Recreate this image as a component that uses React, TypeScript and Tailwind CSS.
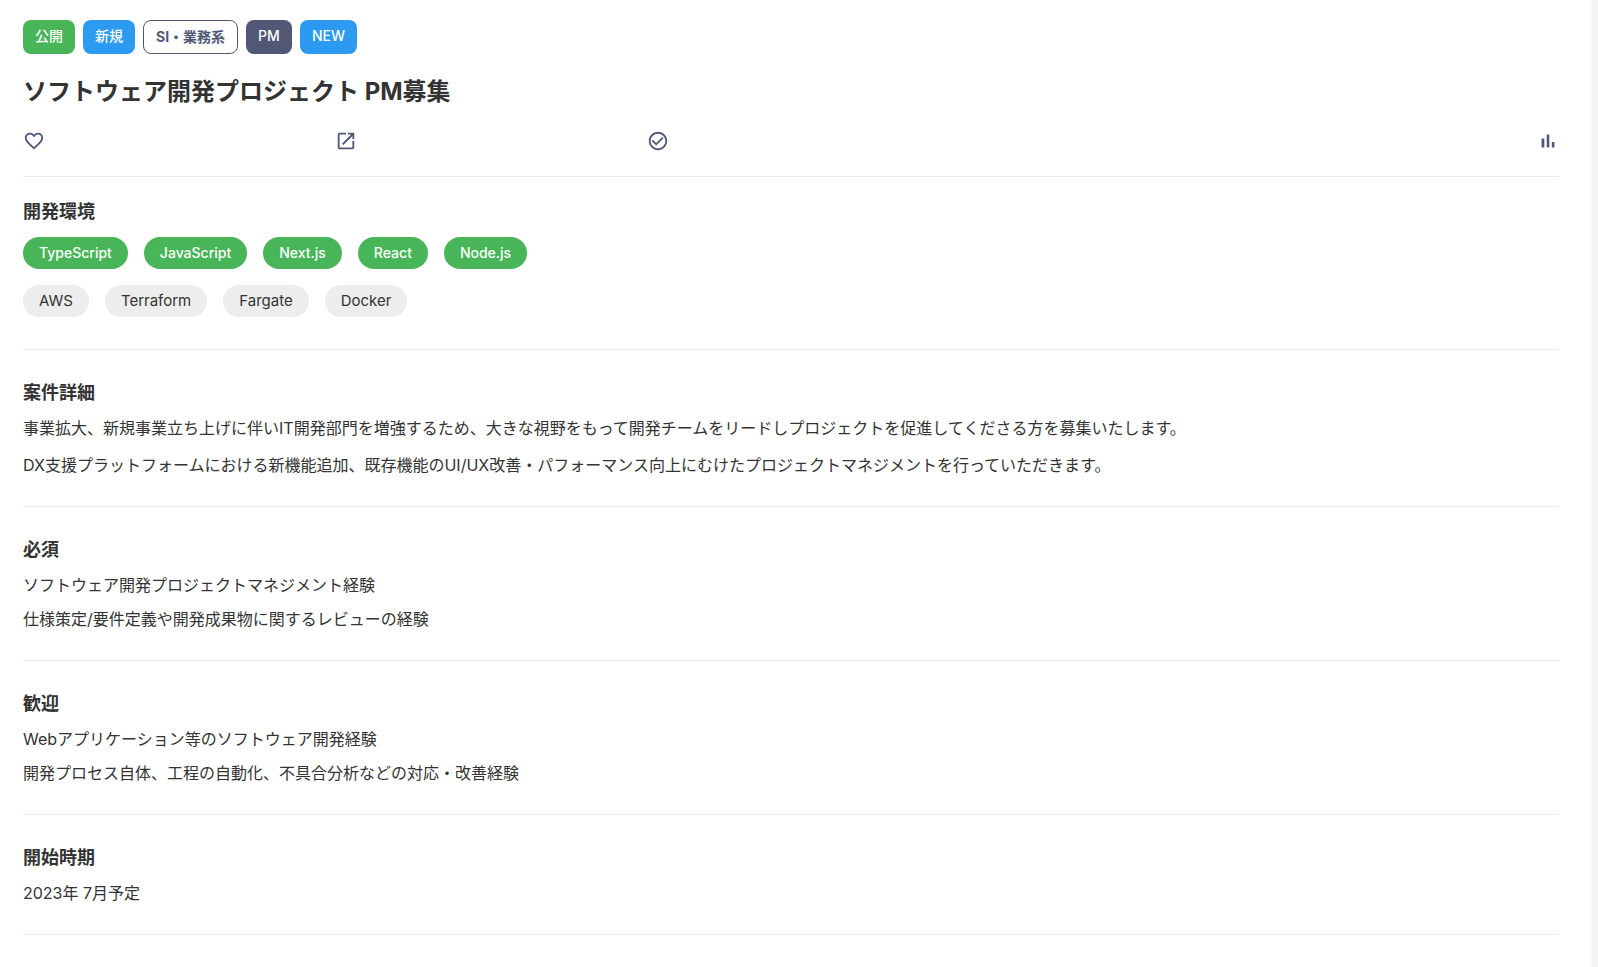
import React from "react";
import { MdCheckCircleOutline, MdFavoriteBorder, MdOpenInNew } from "react-icons/md";

const badges = [
  { label: "公開", style: "bg-[#48b658] pb-0.5 font-medium text-white" },
  { label: "新規", style: "bg-[#2b9af0] pb-0.5 font-medium text-white" },
  {
    label: "SI・業務系",
    style: "border border-[#505876] bg-white font-bold text-[#505876]",
  },
  { label: "PM", style: "bg-[#505876] pb-0.5 font-medium text-white" },
  { label: "NEW", style: "bg-[#2b9af0] pb-0.5 font-medium text-white" },
];

const languages = ["TypeScript", "JavaScript", "Next.js", "React", "Node.js"];
const tools = ["AWS", "Terraform", "Fargate", "Docker"];

function StatsIcon() {
  return (
    <svg width="22" height="22" viewBox="0 0 24 24" fill="currentColor" aria-hidden="true">
      <path d="M5 9.2h3V19H5zM10.6 5h2.8v14h-2.8zM16.2 13H19v6h-2.8z" />
    </svg>
  );
}

function TagRow({ items, style }: { items: string[]; style: string }) {
  return (
    <ul className="flex flex-wrap gap-4">
      {items.map((item) => (
        <li key={item} className={`flex h-8 items-center rounded-full px-4 ${style}`}>
          {item}
        </li>
      ))}
    </ul>
  );
}

function Section({ title, children }: { title: string; children: React.ReactNode }) {
  return (
    <section className="border-b border-[#ebebeb] pt-[31px] pb-[29px]">
      <h2 className="mb-[11px] text-lg leading-6 font-bold">{title}</h2>
      {children}
    </section>
  );
}

function Requirements({ items }: { items: string[] }) {
  return (
    <ul className="flex flex-col gap-[10px]">
      {items.map((item) => (
        <li key={item}>{item}</li>
      ))}
    </ul>
  );
}

export default function App() {
  return (
    <div className="min-h-screen bg-[#f5f5f5] pr-[7px]">
      <main
        lang="ja"
        className="min-h-screen bg-white pt-5 pr-8 pb-8 pl-[23px] font-['Inter','Noto_Sans_CJK_JP',sans-serif] text-base leading-6 text-[#333333]"
      >
        <header className="border-b border-[#ebebeb] pb-6">
          <ul className="flex flex-wrap gap-2">
            {badges.map((badge) => (
              <li
                key={badge.label}
                className={`flex h-[34px] items-center rounded-lg px-3 text-sm ${badge.style}`}
              >
                {badge.label}
              </li>
            ))}
          </ul>
          <h1 className="mt-[22px] text-2xl leading-8 font-bold">
            ソフトウェア開発プロジェクト PM募集
          </h1>
          <div className="mt-[22px] grid grid-cols-5 gap-6 text-[#505876]">
            <button type="button" aria-label="お気に入り" className="justify-self-start">
              <MdFavoriteBorder size={22} />
            </button>
            <button type="button" aria-label="別タブで開く" className="justify-self-start">
              <MdOpenInNew size={22} />
            </button>
            <button type="button" aria-label="応募済み" className="justify-self-start">
              <MdCheckCircleOutline size={22} />
            </button>
            <button type="button" aria-label="統計" className="col-start-5 justify-self-end">
              <StatsIcon />
            </button>
          </div>
        </header>

        <section className="border-b border-[#ebebeb] pt-[23px] pb-8">
          <h2 className="mb-[13px] text-lg leading-6 font-bold">開発環境</h2>
          <div className="flex flex-col gap-4">
            <TagRow items={languages} style="bg-[#48b658] text-sm font-medium text-white" />
            <TagRow items={tools} style="bg-[#ededed] text-[15px]" />
          </div>
        </section>

        <Section title="案件詳細">
          <div className="flex flex-col gap-[13px]">
            <p>
              事業拡大、新規事業立ち上げに伴いIT開発部門を増強するため、大きな視野をもって開発チームをリードしプロジェクトを促進してくださる方を募集いたします。
            </p>
            <p>
              DX支援プラットフォームにおける新機能追加、既存機能のUI/UX改善・パフォーマンス向上にむけたプロジェクトマネジメントを行っていただきます。
            </p>
          </div>
        </Section>

        <Section title="必須">
          <Requirements
            items={[
              "ソフトウェア開発プロジェクトマネジメント経験",
              "仕様策定/要件定義や開発成果物に関するレビューの経験",
            ]}
          />
        </Section>

        <Section title="歓迎">
          <Requirements
            items={[
              "Webアプリケーション等のソフトウェア開発経験",
              "開発プロセス自体、工程の自動化、不具合分析などの対応・改善経験",
            ]}
          />
        </Section>

        <Section title="開始時期">
          <p>2023年 7月予定</p>
        </Section>
      </main>
    </div>
  );
}
